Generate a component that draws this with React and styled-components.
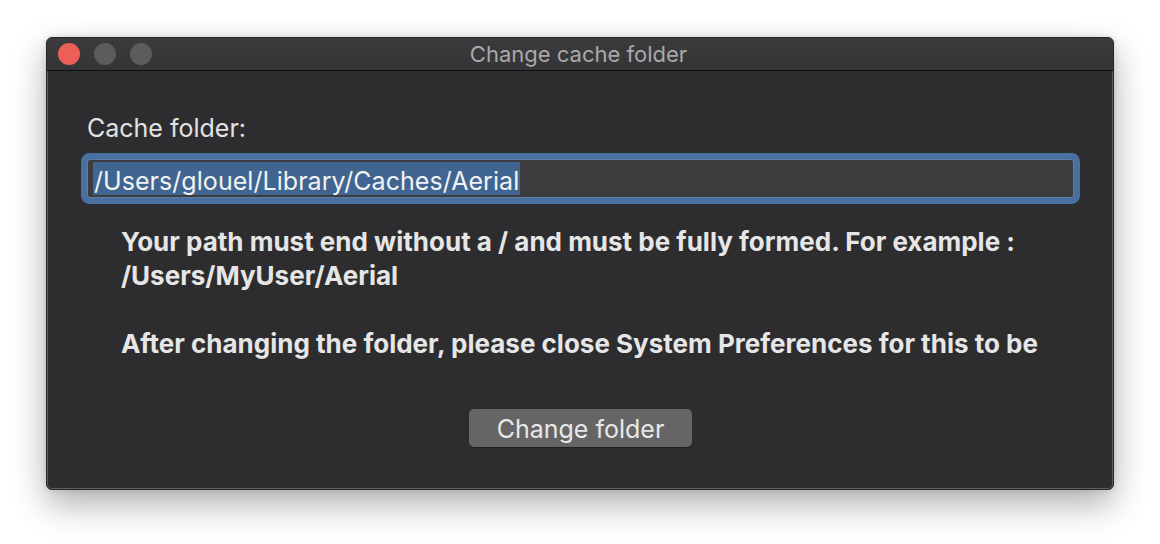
import React from "react";
import styled, { createGlobalStyle } from "styled-components";

const Global = createGlobalStyle`
  html, body { margin: 0; padding: 0; background: #ffffff; }
  body { font-family: Inter, "Noto Sans", sans-serif; -webkit-font-smoothing: antialiased; }
  #root { width: 1160px; height: 544px; }
`;

const Stage = styled.div`
  width: 1160px;
  height: 544px;
  box-sizing: border-box;
  padding: 37px 46px 0 46px;
  background: #ffffff;
`;

const Window = styled.div`
  width: 1068px;
  height: 453px;
  box-sizing: border-box;
  border-radius: 6px;
  background: #2d2d2f;
  border: 1px solid #262626;
  box-shadow: inset 0 0 0 1px #5e5e60, 0 14px 34px rgba(0, 0, 0, 0.32), 0 0 6px rgba(0,0,0,0.12);
  display: flex;
  flex-direction: column;
  overflow: hidden;
`;

const TitleBar = styled.div`
  height: 32px;
  flex: none;
  display: flex;
  align-items: center;
  position: relative;
  background: linear-gradient(#3b3b3d, #353537);
  border-bottom: 1px solid #0f0f0f;
  padding-left: 11px;
  gap: 14px;
`;

const Light = styled.span`
  width: 22px;
  height: 22px;
  border-radius: 50%;
  background: ${(p) => p.$c};
  flex: none;
`;

const Title = styled.div`
  position: absolute;
  left: 0;
  right: 0;
  top: 0;
  bottom: 0;
  display: flex;
  align-items: center;
  justify-content: center;
  color: #a9a9aa;
  font-size: 22px;
  padding-right: 3px;
  pointer-events: none;
`;

const Body = styled.div`
  flex: 1;
  display: flex;
  flex-direction: column;
  padding: 42px 39px 0 40px;
`;

const Label = styled.div`
  color: #e2e2e2;
  font-size: 25px;
  line-height: 30px;
`;

const Field = styled.div`
  margin-top: 16px;
  height: 39px;
  box-sizing: border-box;
  border-radius: 3px;
  background: #3c3c3e;
  border: 1px solid #5f7ea3;
  box-shadow: 0 0 0 6px #4870a0;
  display: flex;
  align-items: center;
  padding-left: 5px;
`;

const Selected = styled.span`
  display: inline-block;
  box-sizing: border-box;
  height: 33px;
  padding: 6px 1px 0 1px;
  background: #3f6590;
  color: #f2f2f2;
  font-size: 25px;
  line-height: 27px;
  letter-spacing: 0.05px;
  white-space: nowrap;
`;

const Notes = styled.div`
  margin-top: 27px;
  padding-left: 34px;
  color: #e6e6e6;
  font-weight: 700;
  font-size: 26px;
  line-height: 34px;
`;

const Para = styled.p`
  margin: 0 0 ${(p) => (p.$last ? 0 : 34)}px 0;
`;

const ButtonRow = styled.div`
  display: flex;
  justify-content: center;
  margin-top: 48px;
`;

const Button = styled.button`
  width: 223px;
  height: 38px;
  box-sizing: border-box;
  border: none;
  border-radius: 5px;
  background: #656566;
  color: #e8e8e8;
  font-family: Inter, "Noto Sans", sans-serif;
  font-size: 25px;
  line-height: 36px;
  padding: 2px 0 0 0;
  box-shadow: 0 1px 0 rgba(0,0,0,0.3);
`;

export default function App() {
  return (
    <Stage>
      <Global />
      <Window>
        <TitleBar>
          <Light $c="#ec5f57" />
          <Light $c="#5c5c5e" />
          <Light $c="#5c5c5e" />
          <Title>Change cache folder</Title>
        </TitleBar>
        <Body>
          <Label>Cache folder:</Label>
          <Field>
            <Selected>/Users/glouel/Library/Caches/Aerial</Selected>
          </Field>
          <Notes>
            <Para>
              Your path must end without a / and must be fully formed. For example :
              <br />
              /Users/MyUser/Aerial
            </Para>
            <Para $last>
              After changing the folder, please close System Preferences for this to be
            </Para>
          </Notes>
          <ButtonRow>
            <Button>Change folder</Button>
          </ButtonRow>
        </Body>
      </Window>
    </Stage>
  );
}
